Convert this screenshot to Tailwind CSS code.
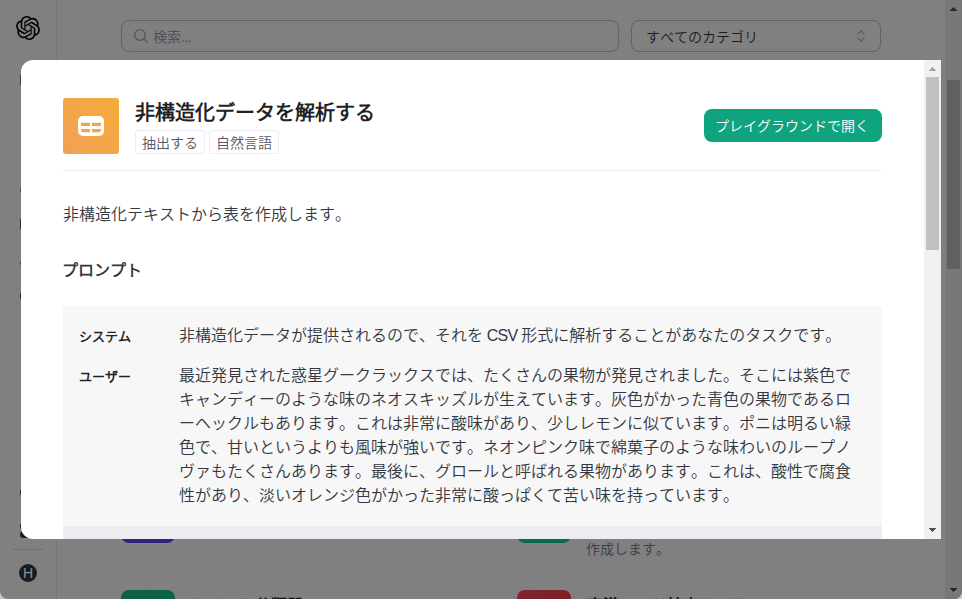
<!DOCTYPE html>
<html lang="ja">
<head>
    <meta charset="UTF-8">
    <meta name="viewport" content="width=device-width, initial-scale=1.0">
    <title>Examples</title>
    <script src="https://cdn.jsdelivr.net/npm/@tailwindcss/browser@4"></script>
</head>
<body class="w-[962px] h-[599px] overflow-hidden bg-[#c8c8c8] font-['Liberation_Sans','Noto_Sans_CJK_JP_DemiLight','Noto_Sans_CJK_JP',sans-serif] font-[350] [font-kerning:none] text-[#353740]">
    <div class="relative w-[962px] h-[599px] overflow-hidden rounded-b-lg bg-[#808080]">

        <!-- Page behind the dialog -->
        <div class="flex h-full">
            <nav class="flex flex-col w-[57px] h-full items-center border-r border-[#777779] pt-4 pb-4">
                <svg class="size-6" viewBox="0 0 24 24" fill="#000"><path d="M22.2819 9.8211a5.9847 5.9847 0 0 0-.5157-4.9108 6.0462 6.0462 0 0 0-6.5098-2.9A6.0651 6.0651 0 0 0 4.9807 4.1818a5.9847 5.9847 0 0 0-3.9977 2.9 6.0462 6.0462 0 0 0 .7427 7.0966 5.98 5.98 0 0 0 .511 4.9107 6.051 6.051 0 0 0 6.5146 2.9001A5.9847 5.9847 0 0 0 13.2599 24a6.0557 6.0557 0 0 0 5.7718-4.2058 5.9894 5.9894 0 0 0 3.9977-2.9001 6.0557 6.0557 0 0 0-.7475-7.073zm-9.022 12.6081a4.4755 4.4755 0 0 1-2.8764-1.0408l.1419-.0804 4.7783-2.7582a.7948.7948 0 0 0 .3927-.6813v-6.7369l2.02 1.1686a.071.071 0 0 1 .038.052v5.5826a4.504 4.504 0 0 1-4.4945 4.4944zm-9.6607-4.1254a4.4708 4.4708 0 0 1-.5346-3.0137l.142.0852 4.783 2.7582a.7712.7712 0 0 0 .7806 0l5.8428-3.3685v2.3324a.0804.0804 0 0 1-.0332.0615L9.74 19.9502a4.4992 4.4992 0 0 1-6.1408-1.6464zM2.3408 7.8956a4.485 4.485 0 0 1 2.3655-1.9728V11.6a.7664.7664 0 0 0 .3879.6765l5.8144 3.3543-2.0201 1.1685a.0757.0757 0 0 1-.071 0l-4.8303-2.7865A4.504 4.504 0 0 1 2.3408 7.872zm16.5963 3.8558L13.1038 8.364 15.1192 7.2a.0757.0757 0 0 1 .071 0l4.8303 2.7913a4.4944 4.4944 0 0 1-.6765 8.1042v-5.6772a.79.79 0 0 0-.407-.667zm2.0107-3.0231l-.142-.0852-4.7735-2.7818a.7759.7759 0 0 0-.7854 0L9.409 9.2297V6.8974a.0662.0662 0 0 1 .0284-.0615l4.8303-2.7866a4.4992 4.4992 0 0 1 6.6802 4.66zM8.3065 12.863l-2.02-1.1638a.0804.0804 0 0 1-.038-.0567V6.0742a4.4992 4.4992 0 0 1 7.3757-3.4537l-.142.0805L8.704 5.459a.7948.7948 0 0 0-.3927.6813zm1.0976-2.3654l2.602-1.4998 2.6069 1.4998v2.9994l-2.5974 1.4997-2.6067-1.4997Z"/></svg>
                <!-- icons whose left edges show beside the dialog -->
                <div class="flex flex-col w-4 mt-[33px]">
                    <div class="size-3.5 rounded-sm bg-[#3b3c45]"></div>
                    <div class="w-4 h-2 mt-[99px] rounded-sm bg-[#4b4c52]"></div>
                    <div class="w-4 h-3.5 mt-[23px] rounded-sm bg-[#2b2c35]"></div>
                    <div class="w-4 h-1.5 mt-[29px] rounded-sm bg-[#4b4c52]"></div>
                    <div class="w-4 h-2.5 mt-[25px] rounded-sm bg-[#2b2c35]"></div>
                    <div class="size-[13px] mt-[185px] rounded-full bg-[#1b1c22]"></div>
                    <div class="size-2.5 mt-[22px] rounded-full bg-[#1b1c22]"></div>
                    <div class="w-4 h-[7px] rounded-sm bg-[#1b1c22]"></div>
                </div>
                <div class="w-8 h-px mt-auto bg-[#707072]"></div>
                <div class="flex items-center justify-center size-[18px] mt-3.5 mb-px rounded-full bg-[#1a1b20] text-sm leading-none text-[#8f8f8f]">H</div>
            </nav>

            <main class="flex flex-col flex-1 pl-16 pt-5">
                <div class="flex gap-3 text-sm">
                    <div class="flex items-center w-[498px] h-8 pl-[11px] gap-1 rounded-lg border border-[#62626b] text-[#4d4d57]">
                        <svg class="size-4" viewBox="0 0 16 16" fill="none" stroke="#55555f" stroke-width="1.3" stroke-linecap="round"><circle cx="7" cy="7" r="5.3"/><path d="M11 11l3.2 3.2"/></svg>
                        <span class="pt-px">検索<span class="tracking-[-0.5px]">...</span></span>
                    </div>
                    <div class="flex items-center justify-between w-[250px] h-8 pl-3.5 pr-[15px] rounded-lg border border-[#62626b] text-[#1b1c20]">
                        <span class="pt-px">すべてのカテゴリ</span>
                        <svg class="w-2 h-3" viewBox="0 0 8 12" fill="none" stroke="#5b5b66" stroke-width="1.2" stroke-linecap="round" stroke-linejoin="round"><path d="M1 4l3-3 3 3M1 8l3 3 3-3"/></svg>
                    </div>
                </div>
                <div class="grid grid-cols-2 w-[792px] gap-y-[47px] mt-[437px]">
                    <div class="h-[54px]"><div class="size-[54px] rounded-lg bg-[#34217a]"></div></div>
                    <div class="flex h-[54px] gap-4">
                        <div class="size-[54px] rounded-lg bg-[#0d6848]"></div>
                        <p class="mt-[50px] -ml-px text-sm text-[#3c3c45]">作成します。</p>
                    </div>
                    <div class="flex gap-4">
                        <div class="size-[54px] rounded-lg bg-linear-to-r from-[#135e4b] to-[#0d6345]"></div>
                        <p class="mt-1 leading-6 font-bold text-[#101014]">ツイート分類器</p>
                    </div>
                    <div class="flex gap-4">
                        <div class="size-[54px] rounded-lg bg-linear-to-r from-[#7e2434] to-[#7d1f23]"></div>
                        <p class="mt-1 leading-6 font-bold text-[#101014]">空港コード抽出ツール</p>
                    </div>
                </div>
            </main>

            <!-- Page scrollbar -->
            <div class="flex flex-col items-center w-[17px] h-full py-[7px] bg-[#787878]">
                <svg class="w-[7px] h-1" viewBox="0 0 7 4" fill="#282828" shape-rendering="crispEdges"><path d="M3 0h1v1h1v1h1v1h1v1H0V3h1V2h1V1h1z"/></svg>
                <div class="w-[13px] h-[189px] mt-[69px] bg-[#606060]"></div>
                <svg class="w-[7px] h-1 mt-auto" viewBox="0 0 7 4" fill="#282828" shape-rendering="crispEdges"><path d="M0 0h7v1H6v1H5v1H4v1H3V3H2V2H1V1H0z"/></svg>
            </div>
        </div>

        <!-- Dialog -->
        <div class="absolute left-[21px] top-[60px] flex w-[920px] h-[479px] overflow-hidden rounded-l-xl bg-white">
            <div class="flex-1 px-[42px] pt-[38px]">
                <header class="flex h-[73px] border-b border-[#ececf1]">
                    <div class="flex items-center justify-center size-14 rounded-[3px] bg-linear-to-tr from-[#f1a055] to-[#f4ac36]">
                        <svg class="w-[26px] h-5" viewBox="0 0 26 20" fill="none"><rect width="26" height="20" rx="5" fill="#fff"/><g fill="#f2a446"><rect x="3" y="6.7" width="9" height="3.3" rx=".4"/><rect x="14" y="6.7" width="9" height="3.3" rx=".4"/><path d="M3 13h9v3.3H5.5A2.5 2.5 0 0 1 3 13.8zM14 13h9v.8a2.5 2.5 0 0 1-2.5 2.5H14z"/></g></svg>
                    </div>
                    <div class="ml-4">
                        <h1 class="pt-px text-xl leading-7 font-bold text-[#202123]">非構造化データを解析する</h1>
                        <div class="flex gap-1 mt-[3px] text-sm leading-[22px] text-[#565869]">
                            <span class="h-6 px-1.5 pt-px rounded-[3px] border border-[#ececf1]">抽出する</span>
                            <span class="h-6 px-1.5 pt-px rounded-[3px] border border-[#ececf1]">自然言語</span>
                        </div>
                    </div>
                    <button class="h-[33px] mt-[11px] ml-auto pl-[11px] pr-[13px] rounded-lg bg-[#10a37f] text-sm text-white">プレイグラウンドで開く</button>
                </header>

                <p class="mt-8 leading-6">非構造化テキストから表を作成します。</p>
                <h2 class="mt-8 -ml-px leading-6 font-bold">プロンプト</h2>

                <section class="h-[220px] mt-[23px] px-4 pt-[17px] rounded-t-[3px] bg-[#f7f7f8] leading-6">
                    <div class="flex">
                        <div class="w-[100px] pt-0.5 -mb-0.5 text-[13px] font-bold text-[#202123]">システム</div>
                        <p class="pt-px -mb-px whitespace-nowrap">非構造化データが提供されるので、それを<span class="tracking-[-0.7px]"> CSV </span>形式に解析することがあなたのタスクです。</p>
                    </div>
                    <div class="flex mt-[17px]">
                        <div class="w-[100px] pt-px text-[13px] font-bold text-[#202123]">ユーザー</div>
                        <p class="whitespace-nowrap">最近発見された惑星グークラックスでは、たくさんの果物が発見されました。そこには紫色で<br>キャンディーのような味のネオスキッズルが生えています。灰色がかった青色の果物であるロ<br>ーヘックルもあります。これは非常に酸味があり、少しレモンに似ています。ポニは明るい緑<br>色で、甘いというよりも風味が強いです。ネオンピンク味で綿菓子のような味わいのループノ<br>ヴァもたくさんあります。最後に、グロールと呼ばれる果物があります。これは、酸性で腐食<br>性があり、淡いオレンジ色がかった非常に酸っぱくて苦い味を持っています。</p>
                    </div>
                </section>
                <div class="h-16 bg-[#ececf1]"></div>
            </div>

            <!-- Dialog scrollbar -->
            <div class="flex flex-col items-center w-[17px] py-[7px] bg-[#f1f1f1]">
                <svg class="w-[7px] h-1" viewBox="0 0 7 4" fill="#a3a3a3" shape-rendering="crispEdges"><path d="M3 0h1v1h1v1h1v1h1v1H0V3h1V2h1V1h1z"/></svg>
                <div class="w-[13px] h-[173px] mt-1.5 bg-[#c1c1c1]"></div>
                <svg class="w-[7px] h-1 mt-auto" viewBox="0 0 7 4" fill="#505050" shape-rendering="crispEdges"><path d="M0 0h7v1H6v1H5v1H4v1H3V3H2V2H1V1H0z"/></svg>
            </div>
        </div>
    </div>
</body>
</html>
